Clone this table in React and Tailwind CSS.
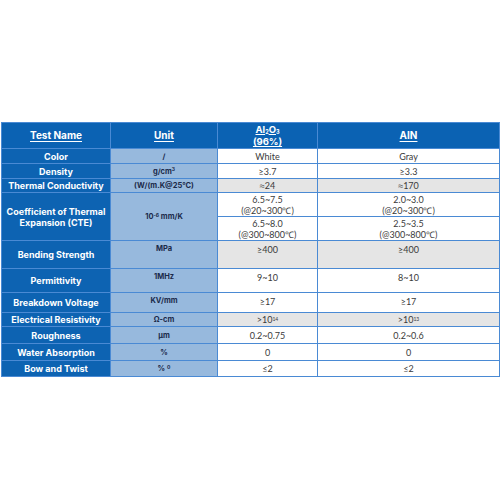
import React from "react";

const Approx = () => <span className="font-['Liberation_Sans',sans-serif]">≈</span>;

const rows = [
  { name: "Color", unit: "/", a: "White", b: "Gray", h: "h-[15px]" },
  { name: "Density", unit: <>g/cm<sup className="text-[5px]">3</sup></>, a: "≥3.7", b: "≥3.3", h: "h-[15px]" },
  {
    name: "Thermal Conductivity",
    unit: "(W/(m.K@25°C)",
    a: <><Approx />24</>,
    b: <><Approx />170</>,
    h: "h-[14px]",
    gray: true,
  },
];

const rows2 = [
  { name: "Bending Strength", unit: "MPa", a: "≥400", b: "≥400", h: "h-[28px]", gray: true, top: true },
  { name: "Permittivity", unit: "1MHz", a: "9~10", b: "8~10", h: "h-[24px]", top: true },
  { name: "Breakdown Voltage", unit: "KV/mm", a: "≥17", b: "≥17", h: "h-[20px]", top: true },
  {
    name: "Electrical Resistivity",
    unit: "Ω-cm",
    a: <>&gt;10<sup className="text-[5px]">14</sup></>,
    b: <>&gt;10<sup className="text-[5px]">13</sup></>,
    h: "h-[14px]",
    gray: true,
  },
  { name: "Roughness", unit: "μm", a: "0.2~0.75", b: "0.2~0.6", h: "h-[17px]" },
  { name: "Water Absorption", unit: "%", a: "0", b: "0", h: "h-[17px]" },
  { name: "Bow and Twist", unit: <>% <sup className="text-[5px]">0</sup></>, a: "≤2", b: "≤2", h: "h-[16px]" },
];

const nameCls =
  "bg-[#0d63b2] text-white font-bold text-[9px] text-center border border-[#4a8ad4] px-1 leading-[11px] font-['Inter',sans-serif]";
const unitCls =
  "bg-[#97b9dd] text-[#1b2a4a] font-bold text-[7.5px] text-center border border-[#4a8ad4] leading-[9px] font-['Inter',sans-serif]";
const valCls =
  "text-[#3a3a3a] text-[9px] text-center border border-[#4a8ad4] leading-[11px] font-['Lato',sans-serif]";

function Row({ r }) {
  const va = r.top ? "align-top pt-[3px]" : "align-middle";
  const bg = r.gray ? "bg-[#e5e5e5]" : "bg-white";
  return (
    <tr className={r.h}>
      <td className={nameCls}>{r.name}</td>
      <td className={`${unitCls} ${va}`}>{r.unit}</td>
      <td className={`${valCls} ${bg} ${va}`}>{r.a}</td>
      <td className={`${valCls} ${bg} ${va}`}>{r.b}</td>
    </tr>
  );
}

export default function App() {
  return (
    <div className="w-[500px] h-[500px] bg-white pt-[122px] pl-[1px]">
      <table className="table-fixed border-collapse w-[498px]">
        <colgroup>
          <col className="w-[109px]" />
          <col className="w-[107px]" />
          <col className="w-[100px]" />
          <col className="w-[182px]" />
        </colgroup>
        <tbody>
          <tr className="h-[26px] bg-[#0b62b3] text-white font-bold text-[10px] font-['Inter',sans-serif]">
            <td className="border border-[#4a8ad4] text-center underline underline-offset-2">Test Name</td>
            <td className="border border-[#4a8ad4] text-center underline underline-offset-2">Unit</td>
            <td className="border border-[#4a8ad4] text-center">
              <div className="h-[11px] leading-[10px] text-[9.5px]">
                <span className="underline">Al</span>
                <span className="text-[5.5px] align-[-1px]">2</span>
                <span className="underline">O</span>
                <span className="text-[5.5px] align-[-1px]">3</span>
              </div>
              <div className="h-[11px] leading-[11px] text-[9.5px] underline">(96%)</div>
            </td>
            <td className="border border-[#4a8ad4] text-center underline underline-offset-2">AIN</td>
          </tr>
          {rows.map((r) => (
            <Row key={r.name} r={r} />
          ))}
          <tr className="h-[24px]">
            <td rowSpan={2} className={nameCls}>
              Coefficient of Thermal
              <br />
              Expansion (CTE)
            </td>
            <td rowSpan={2} className={unitCls}>
              10<sup className="text-[5px]">-6</sup> mm/K
            </td>
            <td className={`${valCls} bg-white`}>
              6.5~7.5
              <br />
              (@20~300℃)
            </td>
            <td className={`${valCls} bg-white`}>
              2.0~3.0
              <br />
              (@20~300℃)
            </td>
          </tr>
          <tr className="h-[24px]">
            <td className={`${valCls} bg-white border-t-[#808080]`}>
              6.5~8.0
              <br />
              (@300~800℃)
            </td>
            <td className={`${valCls} bg-white border-t-[#808080] border-l-[#808080]`}>
              2.5~3.5
              <br />
              (@300~800℃)
            </td>
          </tr>
          {rows2.map((r) => (
            <Row key={r.name} r={r} />
          ))}
        </tbody>
      </table>
    </div>
  );
}
